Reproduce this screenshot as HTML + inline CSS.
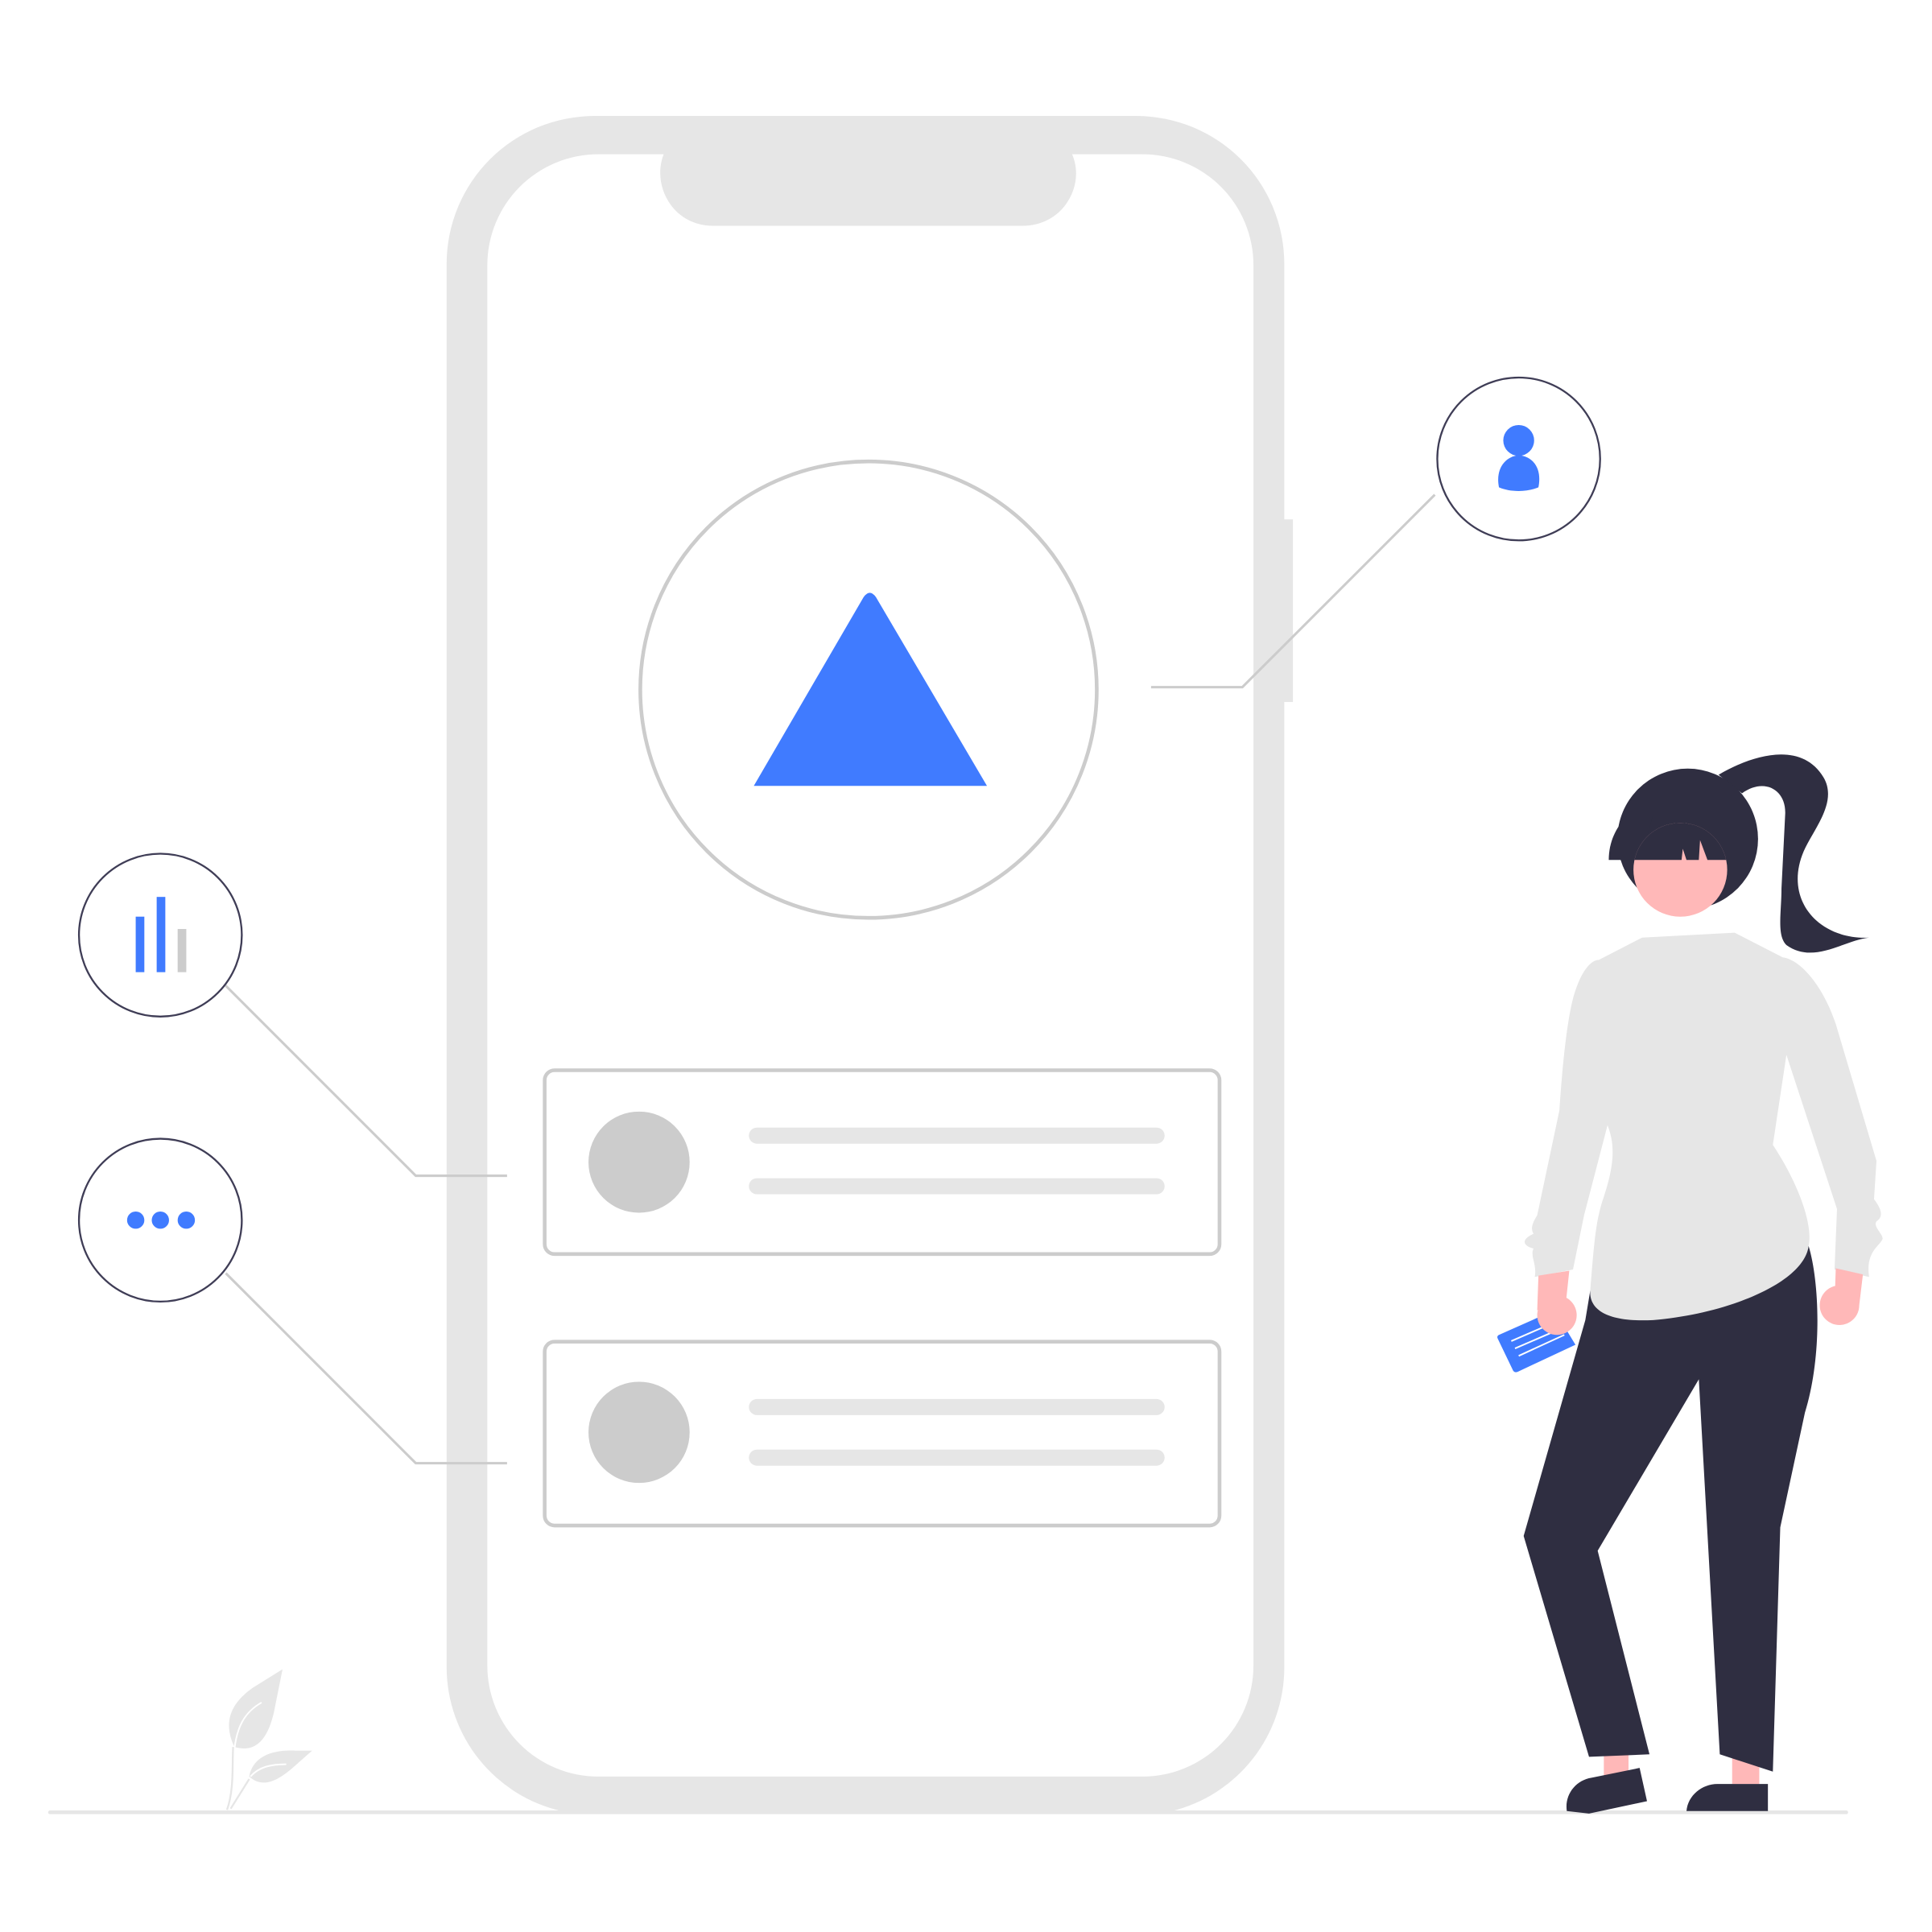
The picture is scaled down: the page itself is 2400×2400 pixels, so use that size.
<!DOCTYPE html>
<html><head><meta charset="utf-8"><style>html,body{margin:0;padding:0;background:#fff;}svg{display:block}</style></head>
<body>
<svg width="2400" height="2400" viewBox="0 0 1566 1566" xmlns="http://www.w3.org/2000/svg">
<defs><clipPath id="face"><circle cx="1362" cy="705" r="38"/></clipPath></defs>
<!-- phone -->
<rect x="1030" y="421" width="18" height="148" fill="#e6e6e6"/>
<path d="M482,94 H921 A120,120 0 0 1 1041,214 V1352 A120,120 0 0 1 950,1468 H455 A120,120 0 0 1 362,1352 V214 A120,120 0 0 1 482,94 Z" fill="#e6e6e6"/>
<path d="M485,125 H538 C528,150 545,183 578,183 H829 C862,183 880,150 869,125 H926 A90,90 0 0 1 1016,215 V1350 A90,90 0 0 1 926,1440 H485 A90,90 0 0 1 395,1350 V215 A90,90 0 0 1 485,125 Z" fill="#fff"/>
<!-- big circle -->
<circle cx="704" cy="559" r="185" fill="#fff" stroke="#ccc" stroke-width="3"/>
<path d="M700,484 Q705,477 710,484 L800,637 H611 Z" fill="#407bff"/>
<!-- cards -->
<rect x="441.5" y="867.5" width="547" height="149" rx="8" fill="#fff" stroke="#ccc" stroke-width="3"/>
<circle cx="518" cy="942" r="41" fill="#ccc"/>
<rect x="607" y="914" width="337" height="13" rx="6.5" fill="#e6e6e6"/>
<rect x="607" y="955" width="337" height="13" rx="6.5" fill="#e6e6e6"/>
<rect x="441.5" y="1087.5" width="547" height="149" rx="8" fill="#fff" stroke="#ccc" stroke-width="3"/>
<circle cx="518" cy="1161" r="41" fill="#ccc"/>
<rect x="607" y="1134" width="337" height="13" rx="6.5" fill="#e6e6e6"/>
<rect x="607" y="1175" width="337" height="13" rx="6.5" fill="#e6e6e6"/>
<!-- connectors -->
<g fill="none" stroke="#ccc" stroke-width="2">
<path d="M933,557 H1007 L1163,401"/>
<path d="M181,797 L337,953 H411"/>
<path d="M183,1032 L337,1186 H411"/>
</g>
<g fill="#fff" stroke="#3f3d56" stroke-width="1.5">
<circle cx="1231" cy="372" r="66"/>
<circle cx="130" cy="758" r="66"/>
<circle cx="130" cy="989" r="66"/>
</g>
<circle cx="1231" cy="357" r="12.5" fill="#407bff"/>
<path d="M1215,395 C1212,380 1220,370 1231,369 C1243,370 1250,380 1247,395 C1238,399 1224,399 1215,395 Z" fill="#407bff"/>
<rect x="110" y="743" width="7" height="45" fill="#407bff"/>
<rect x="127" y="727" width="7" height="61" fill="#407bff"/>
<rect x="144" y="753" width="7" height="35" fill="#ccc"/>
<circle cx="110" cy="989" r="7" fill="#407bff"/>
<circle cx="130" cy="989" r="7" fill="#407bff"/>
<circle cx="151" cy="989" r="7" fill="#407bff"/>
<!-- ground -->
<rect x="39" y="1467.5" width="1459" height="3" rx="1.5" fill="#e6e6e6"/>
<!-- plant -->
<g fill="#e6e6e6">
<path d="M190,1416 C180,1395 188,1380 205,1368 L229,1353 L222,1388 C218,1405 210,1422 190,1416 Z"/>
<path d="M202,1440 C205,1423 222,1418 240,1419 L253,1419 L236,1434 C225,1443 213,1450 202,1440 Z"/>
</g>
<g fill="none" stroke="#fff" stroke-width="1.3">
<path d="M190,1418 C192,1400 198,1388 212,1380"/>
<path d="M203,1440 C210,1432 220,1430 232,1430"/>
</g>
<path d="M184,1467 C190,1450 188,1430 189,1416 M187,1466 L202,1442" fill="none" stroke="#e6e6e6" stroke-width="1.5"/>
<!-- woman -->
<rect x="1300" y="1418" width="20" height="22" fill="#ffb8b8"/>
<rect x="1404" y="1420" width="22" height="26" fill="#ffb8b8"/>
<path d="M1270,1468 C1268,1455 1277,1443 1290,1441 L1329,1433 L1335,1460 L1288,1470 Z" fill="#2f2e41"/>
<path d="M1367,1468 C1368,1455 1380,1446 1392,1446 L1433,1446 L1433,1468 Z" fill="#2f2e41"/>
<path d="M1289,1046 C1300,1070 1440,1065 1466,1010 C1475,1040 1477,1100 1463,1145 L1443,1238 L1437,1436 L1394,1422 L1377,1118 L1295,1257 L1337,1422 L1288,1424 L1235,1245 L1285,1070 Z" fill="#2f2e41"/>
<path d="M1393,628 C1420,612 1460,600 1478,630 C1490,650 1470,672 1462,690 C1445,730 1475,762 1515,760 C1495,762 1470,782 1448,766 C1440,758 1444,740 1444,720 L1447,660 C1448,640 1430,630 1412,643 Z" fill="#2f2e41"/>
<circle cx="1368" cy="680" r="57" fill="#2f2e41"/>
<path d="M1304,697 C1304,680 1312,668 1320,660 L1340,660 L1330,697 Z" fill="#2f2e41"/>
<circle cx="1362" cy="705" r="38" fill="#ffb8b8"/>
<g clip-path="url(#face)"><path d="M1300,650 H1410 V697 H1384 L1378,681 L1377,697 H1367 L1364,688 L1363,697 H1300 Z" fill="#2f2e41"/></g>
<path d="M1296,778 L1331,760 L1406,756 L1445,776 C1460,778 1478,800 1488,830 L1521,941 L1519,972 C1525,980 1527,986 1521,990 C1518,994 1526,1000 1526,1004 C1524,1010 1512,1014 1515,1035 L1487,1029 L1489,980 L1448,855 L1437,928 C1455,955 1470,990 1466,1010 C1462,1040 1400,1065 1340,1070 C1300,1072 1288,1060 1289,1046 C1292,1010 1293,990 1300,970 C1310,940 1308,925 1303,912 L1284,985 L1275,1029 L1244,1035 C1246,1025 1240,1018 1243,1012 C1235,1010 1232,1005 1243,1000 C1240,995 1243,990 1246,985 L1264,900 C1266,870 1270,820 1278,800 C1283,786 1290,778 1296,778 Z" fill="#e6e6e6"/>
<path d="M1215,1082 L1260,1062 L1277,1090 L1230,1112 Q1227,1113 1226,1110 L1214,1085 Q1213,1083 1215,1082 Z" fill="#407bff"/>
<g stroke="#fff" stroke-width="1.3"><path d="M1225,1087 L1255,1074 M1228,1093 L1258,1080 M1231,1099 L1268,1082"/></g>
<path d="M1247,1034 L1272,1030 L1269,1058 L1246,1062 Z" fill="#ffb8b8"/>
<circle cx="1262" cy="1066" r="16" fill="#ffb8b8"/>
<path d="M1488,1028 L1510,1033 L1507,1058 L1487,1058 Z" fill="#ffb8b8"/>
<circle cx="1491" cy="1058" r="16" fill="#ffb8b8"/>
</svg>
</body></html>
